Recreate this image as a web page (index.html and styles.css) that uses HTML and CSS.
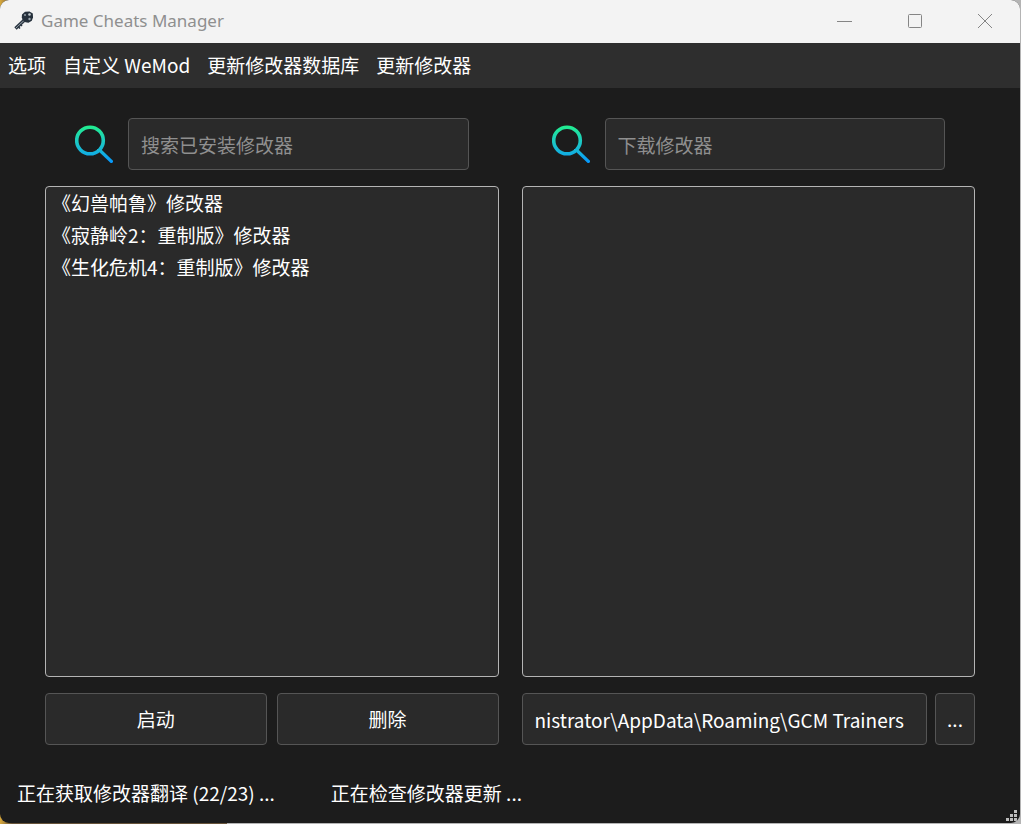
FILE: index.html
```html
<!DOCTYPE html>
<html lang="zh-CN">
<head>
<meta charset="utf-8">
<title>Game Cheats Manager</title>
<link rel="stylesheet" href="styles.css">
</head>
<body>
<svg class="defs" aria-hidden="true">
  <defs>
    <linearGradient id="lens" x1="0" y1="0" x2="0" y2="38" gradientUnits="userSpaceOnUse">
      <stop offset="0" stop-color="#22f08c"/>
      <stop offset="0.45" stop-color="#1cc8c4"/>
      <stop offset="0.75" stop-color="#12b0e0"/>
      <stop offset="1" stop-color="#0596ff"/>
    </linearGradient>
    <symbol id="search" viewBox="0 0 38 38">
      <g fill="none" stroke="url(#lens)">
        <circle cx="15" cy="15.500" r="13.300" stroke-width="3.6"/>
        <path d="M25 25.500l12.500 12" stroke-width="3.200"/>
        <path d="M22 25.500l4 0" stroke-width="3"/>
      </g>
    </symbol>
  </defs>
</svg>
<div class="window">
  <header class="titlebar">
    <svg class="app-icon" viewBox="0 0 20 20" aria-hidden="true">
      <path d="M1.500 17.500L11 8.500" stroke="#2b3642" stroke-width="3.400" fill="none"/>
      <path d="M2 17L10 9.500" stroke="#a9b2ba" stroke-width="0.900" fill="none"/>
      <path d="M4 15.500l2 2M6.500 13.500l1.500 1.500" stroke="#2b3642" stroke-width="1.600"/>
      <path d="M8 3.500l3-2.700 4.500-.3 3.300 2 .2 4-1.200 3.300-3.300 2-3-.5-2.700-2-1-2.800z" fill="#26313c"/>
      <circle cx="11" cy="4" r="1.100" fill="#8d98a1"/>
      <circle cx="15.500" cy="3.500" r="1.300" fill="#c5ccd0"/>
      <circle cx="15.500" cy="8" r="1.200" fill="#9aa4ab"/>
    </svg>
    <h1 class="title">Game Cheats Manager</h1>
    <div class="window-controls">
      <button class="window-button" type="button" aria-label="Minimize"><svg viewBox="0 0 16 16"><path d="M0 8.500h15"/></svg></button>
      <button class="window-button" type="button" aria-label="Maximize"><svg viewBox="0 0 16 16"><rect x="1.500" y="1.500" width="13" height="13" rx="1"/></svg></button>
      <button class="window-button" type="button" aria-label="Close"><svg viewBox="0 0 16 16"><path d="M1 1l14 14M15 1L1 15"/></svg></button>
    </div>
  </header>
  <nav class="menubar">
    <button class="menu-item" type="button">选项</button>
    <button class="menu-item" type="button">自定义 WeMod</button>
    <button class="menu-item" type="button">更新修改器数据库</button>
    <button class="menu-item" type="button">更新修改器</button>
  </nav>
  <main class="content">
    <section class="column">
      <div class="search-row">
        <label for="installed"><svg class="search-icon" aria-hidden="true"><use href="#search"/></svg></label>
        <input class="field" id="installed" type="text" aria-label="搜索已安装修改器" placeholder="搜索已安装修改器">
      </div>
      <ul class="list">
        <li>《幻兽帕鲁》修改器</li>
        <li>《寂静岭2：重制版》修改器</li>
        <li>《生化危机4：重制版》修改器</li>
      </ul>
      <div class="actions">
        <button class="button wide" type="button">启动</button>
        <button class="button wide" type="button">删除</button>
      </div>
    </section>
    <section class="column">
      <div class="search-row">
        <label for="download"><svg class="search-icon" aria-hidden="true"><use href="#search"/></svg></label>
        <input class="field" id="download" type="text" aria-label="下载修改器" placeholder="下载修改器">
      </div>
      <ul class="list"></ul>
      <div class="actions path-row">
        <input class="field path" type="text" aria-label="路径" value="nistrator\AppData\Roaming\GCM Trainers" readonly>
        <button class="button browse" type="button">...</button>
      </div>
    </section>
  </main>
  <footer class="statusbar">
    <span>正在获取修改器翻译 (22/23) ...</span>
    <span>正在检查修改器更新 ...</span>
    <svg class="grip" viewBox="0 0 12 12" aria-hidden="true"><path d="M8 0h3v3h-3zM4 4h3v3h-3zM8 4h3v3h-3zM0 8h3v3h-3zM4 8h3v3h-3zM8 8h3v3h-3z"/></svg>
  </footer>
</div>
</body>
</html>
```
FILE: styles.css
```css
* {
  box-sizing: border-box;
}

body {
  margin: 0;
  min-height: 100vh;
  display: flex;
  padding: 0 1px 1px 0;
  background: linear-gradient(to right, #d9a93c 0, #67533a 12px, #67533a 227px, #b4b4b4 227px);
  font-family: "Noto Sans CJK SC", "Noto Sans", sans-serif;
  font-size: 19px;
  line-height: 32px;
  color: #fff;
}

button,
input {
  font: inherit;
  color: inherit;
}

.defs {
  position: absolute;
  width: 0;
  height: 0;
}

.window {
  flex: 1;
  display: flex;
  flex-direction: column;
  border-radius: 9px;
  overflow: hidden;
  background: #1c1c1c;
}

.titlebar {
  display: flex;
  align-items: center;
  height: 43px;
  padding: 0 0 2px 14px;
  background: #f3f3f3;
  color: #8f8f8f;
}

.app-icon {
  width: 20px;
  height: 20px;
}

.title {
  margin: 0 auto 0 7px;
  font: 400 17px/24px "Noto Sans", "Open Sans", sans-serif;
}

.window-controls {
  display: flex;
}

.window-button {
  width: 70px;
  height: 40px;
  padding: 0;
  border: 0;
  background: none;
}

.window-button svg {
  display: block;
  width: 16px;
  height: 16px;
  margin: auto;
  fill: none;
  stroke: #858585;
}

.menubar {
  display: flex;
  gap: 17px;
  height: 45px;
  padding: 0 8px 2px;
  background: #2e2e2e;
  align-items: center;
}

.menu-item {
  padding: 0;
  border: 0;
  background: none;
}

.content {
  flex: 1;
  display: grid;
  grid-template-columns: 1fr 1fr;
  gap: 23px;
  padding: 30px 45px 0;
}

.column {
  display: flex;
  flex-direction: column;
  gap: 16px;
  min-width: 0;
}

.search-row {
  display: flex;
  align-items: center;
  gap: 15px;
  padding: 0 30px;
}

.search-icon {
  display: block;
  width: 38px;
  height: 38px;
}

.field,
.button {
  height: 52px;
  border: 1px solid #555;
  border-radius: 4px;
  background: #2a2a2a;
}

.field {
  flex: 1;
  min-width: 0;
  padding: 0 12px;
}

.field::placeholder {
  color: #8f8f8f;
  opacity: 1;
}

.list {
  flex: 1;
  margin: 0;
  padding: 0 6px;
  list-style: none;
  border: 1px solid #b4b4b4;
  border-radius: 4px;
  background: #2a2a2a;
}

.actions {
  display: flex;
  gap: 10px;
}

.path-row {
  gap: 8px;
}

.wide {
  flex: 1;
}

.browse {
  width: 40px;
  padding: 0;
}

.statusbar {
  position: relative;
  display: flex;
  gap: 56px;
  padding: 32px 17px 14px;
}

.grip {
  position: absolute;
  right: 2px;
  bottom: 1px;
  width: 12px;
  height: 12px;
  fill: #bdbdbd;
}
```
